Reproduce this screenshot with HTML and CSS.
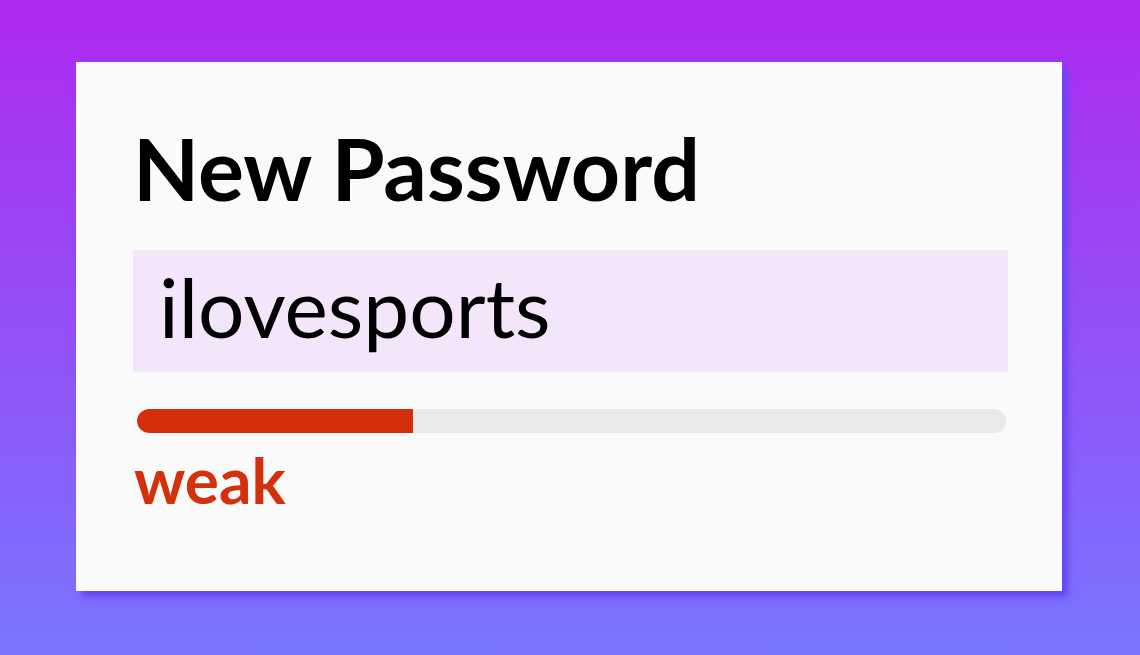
FILE: index.html
```html
<!DOCTYPE html>
<html>
<head>
<meta charset="utf-8">
<link rel="stylesheet" href="styles.css">
</head>
<body>
<div class="card">
  <h1 class="title">New Password</h1>
  <div class="field">ilovesports</div>
  <div class="meter"><div class="meter-fill" style="width:31.75%"></div></div>
  <div class="strength">weak</div>
</div>
</body>
</html>
```
FILE: styles.css
```css
html, body {
  margin: 0;
  padding: 0;
  height: 100%;
}
body {
  background: linear-gradient(to bottom, #ae29ef 0%, #7876ff 100%);
  font-family: "Lato", "Noto Sans", sans-serif;
  overflow: hidden;
}
.card {
  margin: 62px 0 0 76px;
  width: 986px;
  height: 529px;
  box-sizing: border-box;
  background: #fafafa;
  padding: 56px 54px 0 57px;
  box-shadow: 6px 6px 6px #6846f6;
  display: flex;
  flex-direction: column;
}
.title {
  margin: 0;
  font-size: 86px;
  font-weight: 700;
  line-height: 100px;
  color: #000;
}
.field {
  margin-top: 32px;
  height: 122px;
  background: #f3e6fa;
  font-size: 82px;
  line-height: 112px;
  padding-left: 26px;
  color: #000;
}
.meter {
  margin: 37px 2px 0 4px;
  height: 24px;
  border-radius: 12px;
  background: #e9e9e9;
  overflow: hidden;
}
.meter-fill {
  height: 100%;
  background: #d42e0a;
  border-radius: 12px 0 0 12px;
}
.strength {
  margin-top: 12px;
  margin-left: 1px;
  font-size: 64px;
  font-weight: 700;
  line-height: 70px;
  color: #d4300b;
}
```
